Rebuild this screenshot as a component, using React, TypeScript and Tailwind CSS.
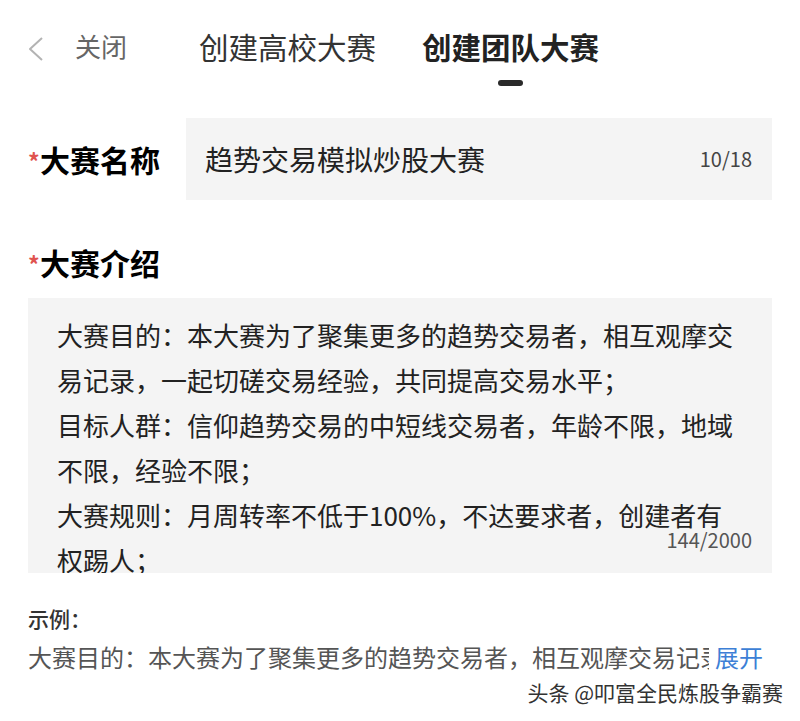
const font = { fontFamily: '"Noto Sans CJK SC", "Noto Sans", sans-serif' }

const intro =
  "大赛目的：本大赛为了聚集更多的趋势交易者，相互观摩交易记录，一起切磋交易经验，共同提高交易水平；"

function Back() {
  return (
    <svg width="16" height="24" viewBox="0 0 16 24" className="ml-[28px] mt-[9px]">
      <polyline points="14,1 2,12 14,23" fill="none" stroke="#b3b3b3" strokeWidth="2" strokeLinejoin="round" />
    </svg>
  )
}

function Label({ text }: { text: string }) {
  return (
    <div className="flex items-center">
      <span className="text-[#e0534f] text-[23px] font-bold leading-[24px] w-[12px] translate-y-[2px]">*</span>
      <span className="text-[30px] font-bold leading-[40px] text-black">{text}</span>
    </div>
  )
}

export default function App() {
  return (
    <div className="w-[800px] h-[721px] bg-white overflow-hidden text-[#222]" style={font}>
      {/* header */}
      <div className="flex items-start pt-[28px] h-[90px]">
        <Back />
        <span className="ml-[31px] text-[26px] leading-[36px] text-[#666]">关闭</span>
        <span className="ml-[72px] text-[29.5px] leading-[36px] text-[#333]">创建高校大赛</span>
        <div className="ml-[46px] flex flex-col items-center">
          <span className="text-[29.5px] leading-[36px] font-bold text-[#222]">创建团队大赛</span>
          <div className="mt-[16px] w-[25px] h-[6px] rounded-full bg-[#2a2a2a]" />
        </div>
      </div>

      {/* name */}
      <div className="flex items-center mt-[28px] pl-[28px] pr-[28px]">
        <div className="w-[158px]">
          <Label text="大赛名称" />
        </div>
        <div className="flex-1 h-[82px] bg-[#f4f4f4] flex items-center justify-between pl-[19px] pr-[20px]">
          <span className="text-[28px] text-[#222]">趋势交易模拟炒股大赛</span>
          <span className="text-[20px] text-[#444]">10/18</span>
        </div>
      </div>

      {/* intro */}
      <div className="mt-[42px] pl-[28px]">
        <Label text="大赛介绍" />
      </div>
      <div className="relative mx-[28px] mt-[16px] h-[275px] bg-[#f4f4f4] overflow-hidden pl-[29px] pr-[25px] pt-[14px]">
        <p className="text-[26px] leading-[45px] text-[#222]">
          {intro}
          <br />
          目标人群：信仰趋势交易的中短线交易者，年龄不限，地域不限，经验不限；
          <br />
          大赛规则：月周转率不低于100%，不达要求者，创建者有权踢人；
        </p>
        <span className="absolute right-[20px] bottom-[18px] text-[20px] text-[#555]">144/2000</span>
      </div>

      {/* example */}
      <div className="px-[28px] mt-[30px]">
        <div className="text-[21px] font-medium leading-[30px] text-[#333]">示例：</div>
        <div className="flex items-center mt-[6px] text-[24px] leading-[36px]">
          <div className="w-[681px] overflow-hidden whitespace-nowrap text-[#555]">
            {intro}
          </div>
          <span className="ml-[6px] text-[#3d7fd6]">展开</span>
        </div>
      </div>

      <div className="flex justify-end pr-[17px] mt-[2px]">
        <span
          className="text-[21px] leading-[30px] text-[#333]"
          style={{ textShadow: "0 0 2px #fff, 0 0 2px #fff" }}
        >
          头条 @叩富全民炼股争霸赛
        </span>
      </div>
    </div>
  )
}
